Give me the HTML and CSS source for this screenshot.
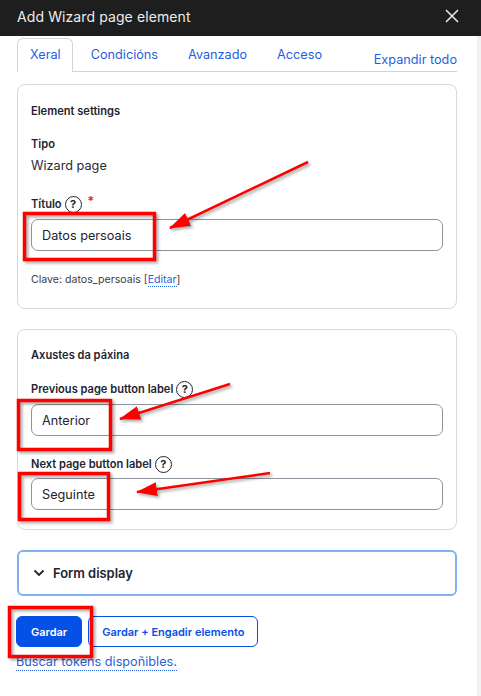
FILE: index.html
```html
<!DOCTYPE html>
<html lang="gl">
<head>
<meta charset="utf-8">
<title>Add Wizard page element</title>
<link rel="stylesheet" href="styles.css">
</head>
<body>
<div class="dialog">
  <header class="titlebar">
    <span class="title">Add Wizard page element</span>
    <svg class="close" width="14" height="14" viewBox="0 0 14 14"><path d="M1 1 L13 13 M13 1 L1 13" stroke="#e6e6e6" stroke-width="1.6" fill="none"/></svg>
  </header>
  <div class="body">
    <main class="content">
      <nav class="tabs">
        <a class="tab active">Xeral</a>
        <a class="tab">Condicións</a>
        <a class="tab">Avanzado</a>
        <a class="tab">Acceso</a>
        <a class="expand">Expandir todo</a>
      </nav>

      <section class="card card-element">
        <h3 class="legend">Element settings</h3>
        <div class="label lbl-tipo">Tipo</div>
        <div class="value">Wizard page</div>
        <div class="label lbl-title">Título <span class="help">?</span> <span class="req">*</span></div>
        <div class="input">Datos persoais</div>
        <div class="desc">Clave: datos_persoais [<a class="edit">Editar</a>]</div>
      </section>

      <section class="card card-page">
        <h3 class="legend">Axustes da páxina</h3>
        <div class="label lbl-prev">Previous page button label <span class="help">?</span></div>
        <div class="input">Anterior</div>
        <div class="label lbl-next">Next page button label <span class="help">?</span></div>
        <div class="input">Seguinte</div>
      </section>

      <div class="details">
        <svg class="chev" width="12" height="8" viewBox="0 0 12 8"><path d="M1.5 1.5 L6 6 L10.5 1.5" stroke="#222330" stroke-width="1.8" fill="none"/></svg>
        <span>Form display</span>
      </div>

      <div class="actions">
        <button class="btn primary">Gardar</button>
        <button class="btn secondary">Gardar + Engadir elemento</button>
      </div>
      <a class="tokens">Buscar tokens dispoñibles.</a>
    </main>
    <div class="scrollbar"></div>
  </div>
</div>

<svg class="annot" width="481" height="696" viewBox="0 0 481 696">
  <defs>
    <marker id="ah" markerUnits="userSpaceOnUse" markerWidth="22" markerHeight="14" refX="20" refY="7" orient="auto">
      <path d="M0 0 L21 7 L0 14 Z" fill="#ff0000"/>
    </marker>
  </defs>
  <g fill="none" stroke="#ff0000" stroke-width="3.5">
    <rect x="24.5" y="213.5" width="130" height="46"/>
    <rect x="18.5" y="400.5" width="92" height="49"/>
    <rect x="19.5" y="473.5" width="89" height="46"/>
    <rect x="9.5" y="607.5" width="82" height="49"/>
  </g>
  <g stroke="#ff0000" stroke-width="2.5" marker-end="url(#ah)">
    <line x1="308" y1="162" x2="170" y2="228"/>
    <line x1="230" y1="384" x2="120" y2="419"/>
    <line x1="270" y1="473" x2="137" y2="492"/>
  </g>
</svg>
</body>
</html>
```

FILE: styles.css
```css
* { box-sizing: border-box; }
html, body { margin: 0; padding: 0; }
body {
  width: 481px;
  height: 696px;
  overflow: hidden;
  background: #fff;
  font-family: Inter, "Noto Sans", sans-serif;
  color: #222330;
  position: relative;
}
.titlebar {
  height: 36px;
  background: #1e1e1e;
  display: flex;
  align-items: center;
  justify-content: space-between;
  padding: 0 22px 4px 17px;
}
.title {
  color: #ececec;
  font-size: 14px;
  letter-spacing: 0.1px;
}
.close { display: block; }
.body {
  display: flex;
  height: 660px;
}
.content {
  flex: 1;
  padding: 2px 20px 0 17px;
}
.scrollbar {
  width: 4px;
  background: #f1f1f1;
}
.tabs {
  display: flex;
  align-items: flex-end;
  height: 34px;
  border-bottom: 1px solid #d3d4d9;
}
.tab {
  height: 34px;
  display: flex;
  align-items: center;
  padding: 0 11px 3px 12px;
  margin-right: 5px;
  font-size: 12.7px;
  color: #1f5fe0;
  margin-bottom: -1px;
  border: 1px solid transparent;
  border-bottom: none;
}
.tab.active {
  border-color: #d3d4d9;
  border-radius: 6px 6px 0 0;
  background: #fff;
  height: 34px;
}
.expand {
  margin-left: auto;
  font-size: 12.7px;
  color: #1f5fe0;
  padding-bottom: 4px;
}
.card {
  margin-top: 12px;
  border: 1px solid #d8d9de;
  border-radius: 8px;
  padding: 18px 13px 20px;
}
.card-page { margin-top: 20px; padding: 17px 13px 19px; }
.legend {
  margin: 0;
  font-size: 11.1px;
  font-weight: 600;
  line-height: 16px;
}
.label {
  font-size: 11.1px;
  font-weight: 600;
  line-height: 20px;
  display: flex;
  align-items: center;
  gap: 3px;
}
.lbl-tipo { line-height: 16px; margin-top: 17px; }
.lbl-title { margin-top: 19px; }
.lbl-prev { margin-top: 16px; }
.lbl-next { margin-top: 18px; }
.value {
  margin-top: 5px;
  font-size: 12.7px;
  line-height: 18px;
  color: #2a2b33;
}
.help {
  width: 17px;
  height: 17px;
  border: 1.5px solid #222330;
  border-radius: 50%;
  display: inline-flex;
  align-items: center;
  justify-content: center;
  font-size: 11px;
  font-weight: 700;
  line-height: 1;
}
.req { color: #dc2323; font-size: 12px; margin-left: 3px; align-self: flex-start; line-height: 14px; }
.input {
  margin-top: 5px;
  height: 32px;
  border: 1px solid #8e929c;
  border-radius: 7px;
  padding: 0 10px;
  display: flex;
  align-items: center;
  font-size: 12.7px;
  color: #222330;
}
.card-page .input { margin-top: 5px; }
.card-page .lbl-next + .input { margin-top: 4px; }
.desc {
  margin-top: 21px;
  font-size: 10.6px;
  line-height: 16px;
  color: #3d3e45;
}
.edit {
  color: #1f5fe0;
  border-bottom: 1px dotted #1f5fe0;
}
.details {
  margin-top: 20px;
  height: 46px;
  border: 2px solid #80b2f0;
  border-radius: 6px;
  display: flex;
  align-items: center;
  padding-left: 14px;
  gap: 8px;
  font-size: 12.9px;
  font-weight: 600;
}
.chev { display: block; }
.actions {
  margin-top: 20px;
  display: flex;
  gap: 6px;
  margin-left: -1px;
}
.btn {
  height: 31px;
  border-radius: 6px;
  font-family: Inter, "Noto Sans", sans-serif;
  font-size: 11px;
  font-weight: 600;
  padding: 0 14px;
  cursor: pointer;
}
.primary {
  background: #0550e6;
  color: #fff;
  border: 1px solid #0550e6;
}
.secondary {
  background: #fff;
  color: #0550e6;
  border: 1px solid #0550e6;
  padding: 0 13px;
}
.tokens {
  display: inline-block;
  margin-top: 7px;
  font-size: 12.7px;
  color: #2a5fd8;
  border-bottom: 1px dotted #2a5fd8;
  line-height: 16px;
  margin-left: -1px;
}
.annot {
  position: absolute;
  left: 0;
  top: 0;
  pointer-events: none;
  filter: drop-shadow(2px 2px 1.5px rgba(0,0,0,0.35));
}
```
